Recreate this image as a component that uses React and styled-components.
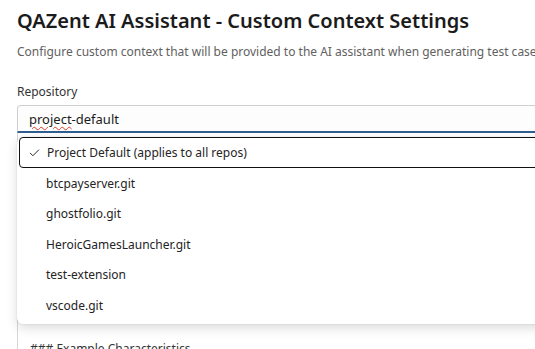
import React from 'react';
import styled, { createGlobalStyle } from 'styled-components';

const GlobalStyle = createGlobalStyle`
  html, body {
    margin: 0;
    padding: 0;
    background: #fff;
    overflow: hidden;
  }
  body {
    font-family: "Noto Sans", "Open Sans", sans-serif;
    color: #242424;
  }
`;

const Page = styled.div`
  width: 535px;
  height: 349px;
  padding: 7px 0 0 17px;
  box-sizing: border-box;
  overflow: hidden;
`;

const Title = styled.h1`
  margin: 0;
  font-size: 20px;
  font-weight: 600;
  line-height: 28px;
  color: #1b1b1b;
  white-space: nowrap;
`;

const Subtitle = styled.p`
  margin: 8px 0 0;
  font-size: 12px;
  line-height: 18px;
  color: #616161;
  white-space: nowrap;
`;

const Field = styled.div`
  margin-top: 22px;
  width: 560px;
`;

const Label = styled.label`
  display: block;
  font-size: 12px;
  line-height: 18px;
  color: #333;
  margin-bottom: 4px;
`;

const Combo = styled.div`
  position: relative;
`;

const Input = styled.div`
  height: 28px;
  box-sizing: border-box;
  border: 1px solid #cfcfcf;
  border-bottom: 2px solid #2e5f8f;
  border-radius: 4px 4px 0 0;
  background: #fdfdfd;
  padding: 0 11px;
  font-size: 13px;
  line-height: 26px;
  color: #1b1b1b;
`;

const Misspelled = styled.span`
  text-decoration: underline wavy #e0392b;
  text-decoration-thickness: 1px;
  text-underline-offset: 2px;
`;

const Menu = styled.ul`
  position: absolute;
  top: calc(100% + 4px);
  left: 0;
  right: 0;
  margin: 0;
  padding: 0 0 3px;
  list-style: none;
  background: #fff;
  border-radius: 6px;
  box-shadow: 0 4px 12px rgba(0, 0, 0, 0.14), 0 0 2px rgba(0, 0, 0, 0.12);
  z-index: 2;
`;

const Item = styled.li`
  display: flex;
  align-items: center;
  height: ${p => (p.$selected ? '31px' : '30.5px')};
  box-sizing: border-box;
  margin: 0 0 0 2px;
  padding-left: ${p => (p.$selected ? '8px' : '27px')};
  gap: 6px;
  font-size: 12px;
  color: #242424;
  border: ${p => (p.$selected ? '1.5px solid #111' : 'none')};
  border-radius: 4px;
`;

const Check = styled.svg`
  width: 13px;
  height: 13px;
  flex: none;
`;

const Editor = styled.div`
  height: 240px;
  border-left: 1px solid #d6d6d6;
  padding: 207px 0 0 12px;
  box-sizing: border-box;
  font-size: 12px;
  color: #333;
  white-space: nowrap;
`;

const repos = [
  'btcpayserver.git',
  'ghostfolio.git',
  'HeroicGamesLauncher.git',
  'test-extension',
  'vscode.git',
];

export default function App() {
  return (
    <>
      <GlobalStyle />
      <Page>
        <Title>QAZent AI Assistant - Custom Context Settings</Title>
        <Subtitle>
          Configure custom context that will be provided to the AI assistant when generating test cases
        </Subtitle>
        <Field>
          <Label>Repository</Label>
          <Combo>
            <Input>
              <Misspelled>project</Misspelled>-default
            </Input>
            <Menu>
              <Item $selected>
                <Check viewBox="0 0 16 16">
                  <path d="M2.5 8.5 L6 12 L13.5 4.5" fill="none" stroke="#242424" strokeWidth="1.2" />
                </Check>
                Project Default (applies to all repos)
              </Item>
              {repos.map(r => (
                <Item key={r}>{r}</Item>
              ))}
            </Menu>
          </Combo>
          <Editor>### Example Characteristics</Editor>
        </Field>
      </Page>
    </>
  );
}
